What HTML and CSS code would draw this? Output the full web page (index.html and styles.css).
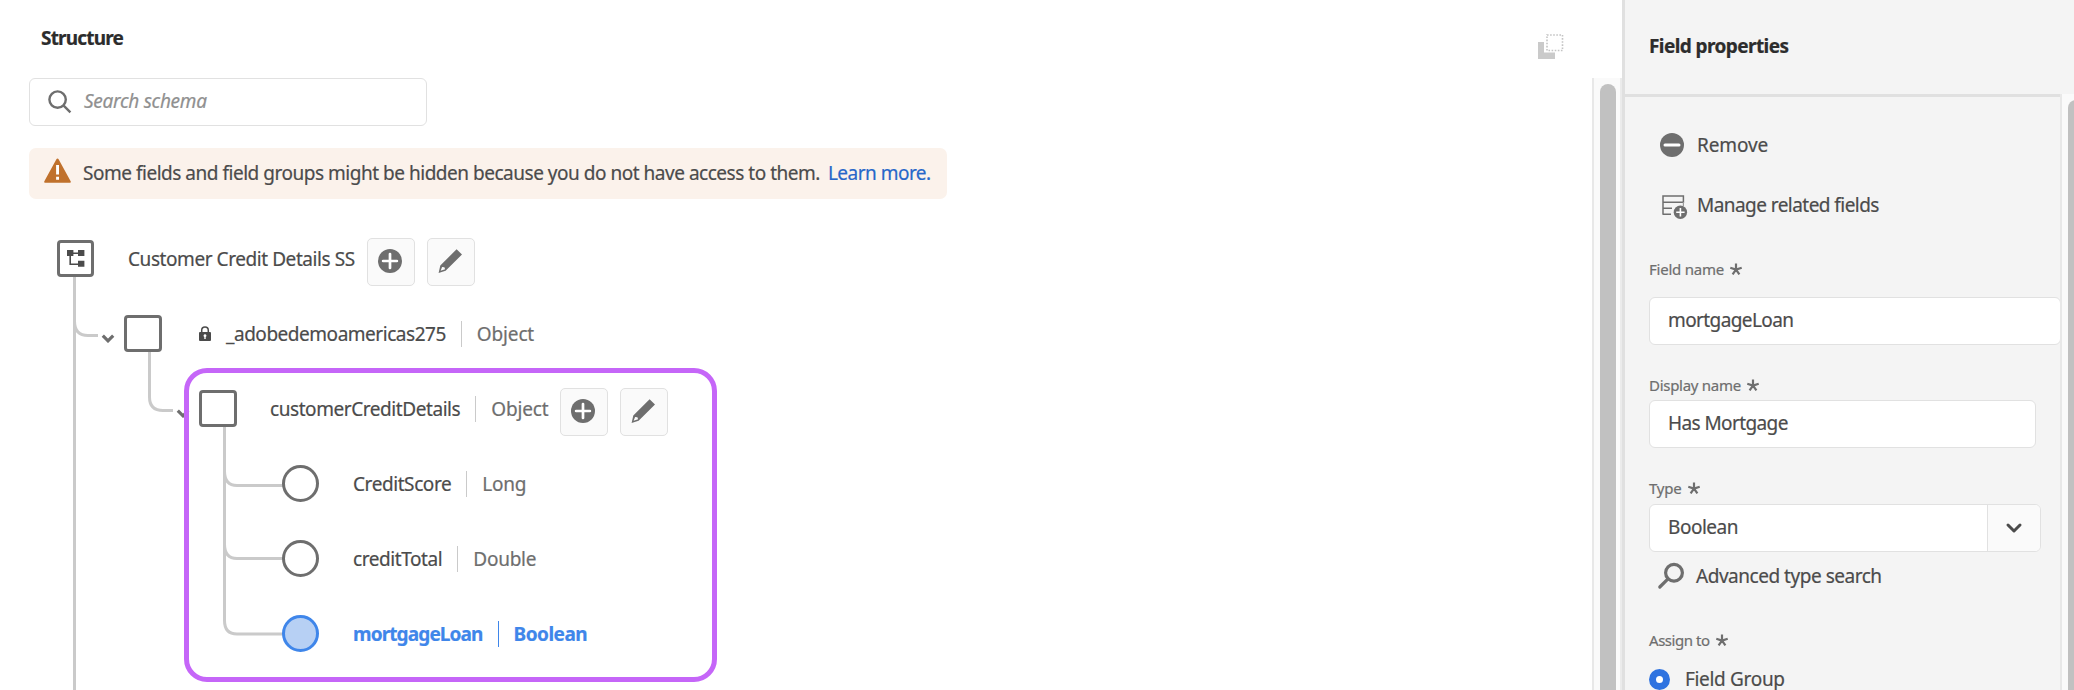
FILE: index.html
```
<!DOCTYPE html>
<html lang="en">
<head>
<meta charset="utf-8">
<title>Schema structure</title>
<link rel="stylesheet" href="styles.css">
</head>
<body>
<svg class="defs" aria-hidden="true">
  <symbol id="plus" viewBox="0 0 24 24"><circle cx="12" cy="12" r="12"/><path d="M12 5.1v13.8M5.1 12h13.8" stroke="#fff" stroke-width="2.7" stroke-linecap="round"/></symbol>
  <symbol id="pencil" viewBox="0 0 24 24"><path fill-rule="evenodd" d="M18.6 0.2 24 5.4 7.6 21.7 0.6 24 2.3 16.6ZM4.1 17.9 2.6 21.7 7.1 20.2 6.4 18.3Z"/></symbol>
  <symbol id="chevron" viewBox="0 0 14 9"><path d="M1.800 1.600l5.200 5.200 5.200-5.200" fill="none" stroke="currentColor" stroke-width="3.200"/></symbol>
  <symbol id="star" viewBox="0 0 12 12"><path d="M6 6.600V.5M6 6.600L.3 4.700M6 6.600L11.700 4.700M6 6.600L2.600 11.400M6 6.600L9.400 11.400" fill="none" stroke="currentColor" stroke-width="2.200"/></symbol>
</svg>
<div class="app">
  <main class="canvas">
    <section class="structure">
      <h1 class="title">Structure</h1>
      <div class="search">
        <svg class="search-icon" viewBox="0 0 24 24"><circle cx="9.6" cy="9.6" r="8.2"/><path d="M15.4 15.4l7 7"/></svg>
        <span class="placeholder">Search schema</span>
      </div>
      <div class="alert">
        <svg class="alert-icon" viewBox="0 0 27 25"><path d="M13.5 0.4Q14.2 0.4 14.6 1.2L26.8 23.4Q27 24.8 26 24.8H1Q0 24.8 0.2 23.4L12.4 1.2Q12.8 0.4 13.5 0.4Z" fill="#c0712c"/><path d="M12.1 7h2.9v9.6h-2.9zM12.1 18.8h2.9v2.9h-2.9z" fill="#fff"/></svg>
        <span class="message">Some fields and field groups might be hidden because you do not have access to them.</span>
        <a class="link">Learn more.</a>
      </div>
      <div class="tree">
        <svg class="lines" viewBox="0 0 340 470" fill="none" stroke="#cacaca" stroke-width="3">
          <path d="M45.5 50V470M45.5 100Q45.5 114.5 59 114.5H69"/>
          <path d="M120.5 125V176Q120.5 189.5 134 189.5H144"/>
          <path d="M195.5 200V399.500Q195.500 413 208 413H255M195.500 250Q195.500 264.500 208 264.500H255M195.500 323Q195.500 337.500 208 337.500H255"/>
        </svg>
        <div class="row root">
          <div class="node"><svg class="schema-icon" viewBox="0 0 18 18"><path d="M3.500 3.200h11M3.200 3.200v11h11" fill="none" stroke="#4b4b4b" stroke-width="1.600"/><path d="M0 0h6.400v6H0zM11 0h6.400v6H11zM11 10.800h6.400v6H11z" fill="#4b4b4b"/></svg></div>
          <span class="name">Customer Credit Details SS</span>
          <div class="btn"><svg class="icon"><use href="#plus"/></svg></div>
          <div class="btn"><svg class="icon"><use href="#pencil"/></svg></div>
        </div>
        <div class="row level-1">
          <svg class="toggle"><use href="#chevron"/></svg>
          <div class="node"></div>
          <svg class="lock" viewBox="0 0 12 15"><path d="M2.700 7V4.400a3.300 3.300 0 0 1 6.600 0V7" fill="none" stroke="#4b4b4b" stroke-width="1.500"/><rect y="6" width="12" height="9" rx="1" fill="#4b4b4b"/><path d="M6 8.200a1.500 1.500 0 0 1 .7 2.800v2H5.300v-2A1.500 1.500 0 0 1 6 8.200Z" fill="#fff"/></svg>
          <span class="name">_adobedemoamericas275</span>
          <span class="type object">Object</span>
        </div>
        <div class="row level-2">
          <svg class="toggle"><use href="#chevron"/></svg>
          <div class="node"></div>
          <span class="name">customerCreditDetails</span>
          <span class="type object">Object</span>
          <div class="btn"><svg class="icon"><use href="#plus"/></svg></div>
          <div class="btn"><svg class="icon"><use href="#pencil"/></svg></div>
        </div>
        <div class="row leaf">
          <div class="node"></div>
          <span class="name">CreditScore</span>
          <span class="type">Long</span>
        </div>
        <div class="row leaf">
          <div class="node"></div>
          <span class="name">creditTotal</span>
          <span class="type">Double</span>
        </div>
        <div class="row leaf selected">
          <div class="node"></div>
          <span class="name">mortgageLoan</span>
          <span class="type">Boolean</span>
        </div>
        <div class="highlight"></div>
      </div>
    </section>
    <svg class="expand-icon" viewBox="0 0 26 25"><path d="M0 8h6v10.500h11V25H0z" fill="#cacaca"/><rect x="9" y="1" width="15.500" height="15.500" fill="none" stroke="#c4c4c4" stroke-width="1.600" stroke-dasharray="1.600 1.500"/></svg>
    <div class="scroll scroll-main"><div class="thumb"></div></div>
  </main>
  <aside class="panel">
    <h2 class="panel-title">Field properties</h2>
    <div class="panel-content">
      <div class="form">
        <div class="action remove">
          <svg class="icon" viewBox="0 0 24 24"><circle cx="12" cy="12" r="12"/><path d="M5 12h14" stroke="#fff" stroke-width="3" stroke-linecap="round"/></svg>
          <span>Remove</span>
        </div>
        <div class="action manage">
          <svg class="icon" viewBox="0 0 24 24"><path d="M0 1H20.400V7.200H0M0 .2V19.800M0 13.300H9M0 19.200H8" fill="none" stroke="#6e6e6e" stroke-width="1.500"/><path d="M20.400 7v4" stroke="#9a9a9a" stroke-width="1.200"/><circle cx="17.400" cy="17.200" r="6.700"/><path d="M17.400 13v8.400M13.200 17.200h8.400" stroke="#fff" stroke-width="1.600"/></svg>
          <span>Manage related fields</span>
        </div>
        <div class="label field-name">Field name <svg class="star"><use href="#star"/></svg></div>
        <div class="input wide">mortgageLoan</div>
        <div class="label display-name">Display name <svg class="star"><use href="#star"/></svg></div>
        <div class="input">Has Mortgage</div>
        <div class="label type-label">Type <svg class="star"><use href="#star"/></svg></div>
        <div class="select"><span class="value">Boolean</span><div class="drop"><svg class="caret" viewBox="0 0 16 10"><path d="M2 2l6 6 6-6"/></svg></div></div>
        <div class="action advanced">
          <svg class="lens" viewBox="0 0 26 26"><circle cx="16" cy="9.800" r="8.400"/><path d="M10 15.800L1.800 24"/></svg>
          <span>Advanced type search</span>
        </div>
        <div class="label assign">Assign to <svg class="star"><use href="#star"/></svg></div>
        <div class="option"><span class="radio"></span><span>Field Group</span></div>
      </div>
      <div class="scroll scroll-panel"><div class="thumb"></div></div>
    </div>
  </aside>
</div>
</body>
</html>
```

FILE: styles.css
```
* { box-sizing: border-box; }

body {
  margin: 0;
  background: #fff;
  color: #4b4b4b;
  font: 19px/26px "Noto Sans", sans-serif;
  letter-spacing: -0.47px;
  white-space: nowrap;
  -webkit-text-stroke: 0.2px;
}

svg { display: block; flex: none; overflow: visible; }
.defs { width: 0; height: 0; position: absolute; }

.app { display: flex; width: 2074px; height: 690px; overflow: hidden; }

.canvas { display: flex; flex: none; width: 1622px; }
.structure { flex: 1; padding: 25px 0 0 29px; }

.title {
  margin: 0 0 27px 12px;
  color: #2c2c2c;
  font-size: 19px;
  font-weight: 700;
  letter-spacing: -0.83px;
}

.search {
  display: flex;
  align-items: center;
  width: 398px;
  height: 48px;
  padding: 0 18px;
  border: 1px solid #e1e1e1;
  border-radius: 6px;
}
.search-icon {
  width: 24px;
  height: 24px;
  fill: none;
  stroke: #6e6e6e;
  stroke-width: 2.4;
}
.placeholder {
  margin: -2px 0 0 12px;
  color: #909090;
  font-style: italic;
  letter-spacing: -0.28px;
}

.alert {
  display: flex;
  align-items: center;
  width: 918px;
  height: 51px;
  margin-top: 22px;
  padding: 0 0 2px 15px;
  border-radius: 7px;
  background: #fbf2eb;
}
.alert-icon { width: 27px; height: 25px; margin: -5px 12px 0 0; }
.message { letter-spacing: -0.48px; }
.link { margin-left: 8px; color: #2767c9; letter-spacing: -0.52px; }

/* Tree */
.tree { position: relative; margin-top: 22px; }
.lines { position: absolute; top: 0; left: 0; width: 340px; height: 470px; }
.row { position: relative; display: flex; align-items: center; height: 75px; }

.node {
  display: flex;
  align-items: center;
  justify-content: center;
  flex: none;
  width: 38px;
  height: 37px;
  border: 3px solid #6e6e6e;
  border-radius: 4px;
  background: #fff;
}
.root { padding-left: 28px; }
.root .node { width: 37px; margin-right: 33px; }
.root .name { letter-spacing: -0.43px; margin: 0 12px 0 1px; }
.schema-icon { width: 18px; height: 18px; }

.btn {
  display: flex;
  align-items: center;
  justify-content: center;
  width: 48px;
  height: 48px;
  margin: 7px 12px 0 0;
  padding: 0 2px 2px 0;
  border: 1px solid #e1e1e1;
  border-radius: 5px;
  background: #fafafa;
}
.icon { width: 24px; height: 24px; fill: #6e6e6e; }

.toggle { width: 14px; height: 9px; margin: 10px 9px 0 0; color: #6e6e6e; }
.level-1 { padding-left: 72px; }
.level-2 { padding-left: 147px; }
.lock { width: 12px; height: 15px; margin: 0 15px 0 37px; }
.level-2 .name { margin-left: 33px; letter-spacing: -0.43px; }
.level-2 .btn:last-child { margin-right: 0; }

.type {
  display: flex;
  align-items: center;
  margin-left: 15px;
  color: #6e6e6e;
  letter-spacing: -0.25px;
}
.type::before {
  content: "";
  width: 1px;
  height: 26px;
  margin-right: 15px;
  background: #cacaca;
}
.type.object { letter-spacing: -0.15px; }
.level-2 .type { margin-right: 11px; }

.leaf { padding-left: 253px; }
.leaf .node { width: 37px; border-radius: 50%; margin-right: 34px; }
.leaf .name { letter-spacing: -0.42px; }
.selected .node { border-color: #3f86ea; background: #b7d0f4; }
.selected .name, .selected .type { color: #3f86ea; font-weight: 700; }
.selected .name { letter-spacing: -0.88px; }
.selected .type { letter-spacing: -0.5px; }
.selected .type::before { background: #3f86ea; }

.highlight {
  position: absolute;
  top: 147px;
  left: 155px;
  width: 533px;
  height: 314px;
  border: 5px solid #c566f8;
  border-radius: 23px;
}

.expand-icon { width: 26px; height: 25px; margin: 34px 28px 0 0; }

/* Scroll bars */
.scroll { flex: none; background: #fafafa; border-left: 2px solid #e8e8e8; }
.thumb { border-radius: 8px; background: #c1c1c1; }
.scroll-main {
  width: 30px;
  margin-top: 78px;
  padding: 6px 4px 0 6px;
  border-right: 2px solid #ebebeb;
}
.scroll-main .thumb { width: 16px; height: 640px; }
.scroll-panel { width: 14px; padding: 6px 0 0 6px; overflow: hidden; }
.scroll-panel .thumb { width: 16px; height: 640px; }

/* Field properties */
.panel {
  display: flex;
  flex-direction: column;
  flex: 1;
  border-left: 3px solid #e0e0e0;
  background: #f4f4f4;
}
.panel-title {
  height: 94px;
  margin: 0;
  padding: 33px 0 0 24px;
  color: #2c2c2c;
  font-size: 19px;
  font-weight: 700;
  letter-spacing: -0.58px;
}
.panel-content { display: flex; flex: 1; min-height: 0; }
.form {
  width: 435px;
  padding: 32px 0 0 24px;
  border-top: 3px solid #e0e0e0;
  overflow: hidden;
}

.action { display: flex; align-items: center; height: 32px; }
.remove { padding-left: 11px; letter-spacing: -0.1px; }
.remove .icon { margin-right: 13px; }
.manage { margin-top: 28px; padding-left: 14px; letter-spacing: -0.55px; }
.manage .icon { margin: 3px 10px 0 0; }

.label {
  display: flex;
  align-items: center;
  gap: 6px;
  height: 20px;
  color: #6e6e6e;
  font-size: 15px;
  letter-spacing: -0.22px;
}
.star { width: 12px; height: 12px; }
.field-name { margin: 38px 0 18px; }
.display-name { margin: 30px 0 5px; letter-spacing: -0.28px; }
.type-label { margin: 30px 0 6px; }

.input, .select {
  display: flex;
  align-items: center;
  width: 387px;
  height: 48px;
  border: 1px solid #e1e1e1;
  border-radius: 6px;
  background: #fff;
}
.input { padding: 0 0 2px 18px; letter-spacing: -0.6px; }
.input.wide { width: 412px; }
.select { width: 392px; overflow: hidden; }
.value { flex: 1; padding: 0 0 2px 18px; }
.drop {
  display: flex;
  align-items: center;
  justify-content: center;
  width: 53px;
  height: 46px;
  border-left: 1px solid #e1e1e1;
  background: #fafafa;
}
.caret {
  width: 16px;
  height: 10px;
  margin-right: 1px;
  fill: none;
  stroke: #4b4b4b;
  stroke-width: 3;
  stroke-linecap: round;
  stroke-linejoin: round;
}
.advanced { margin-top: 8px; padding-left: 9px; }
.lens { width: 26px; height: 26px; margin-right: 12px; fill: none; stroke: #6e6e6e; stroke-width: 3.2; stroke-linecap: round; }
.assign { margin-top: 38px; letter-spacing: -0.45px; }
.option {
  display: flex;
  align-items: center;
  height: 21px;
  margin-top: 19px;
  line-height: 21px;
  letter-spacing: -0.32px;
}
.radio {
  width: 21px;
  height: 21px;
  margin-right: 15px;
  border: 7px solid #2f73e0;
  border-radius: 50%;
  background: #fff;
}
```
